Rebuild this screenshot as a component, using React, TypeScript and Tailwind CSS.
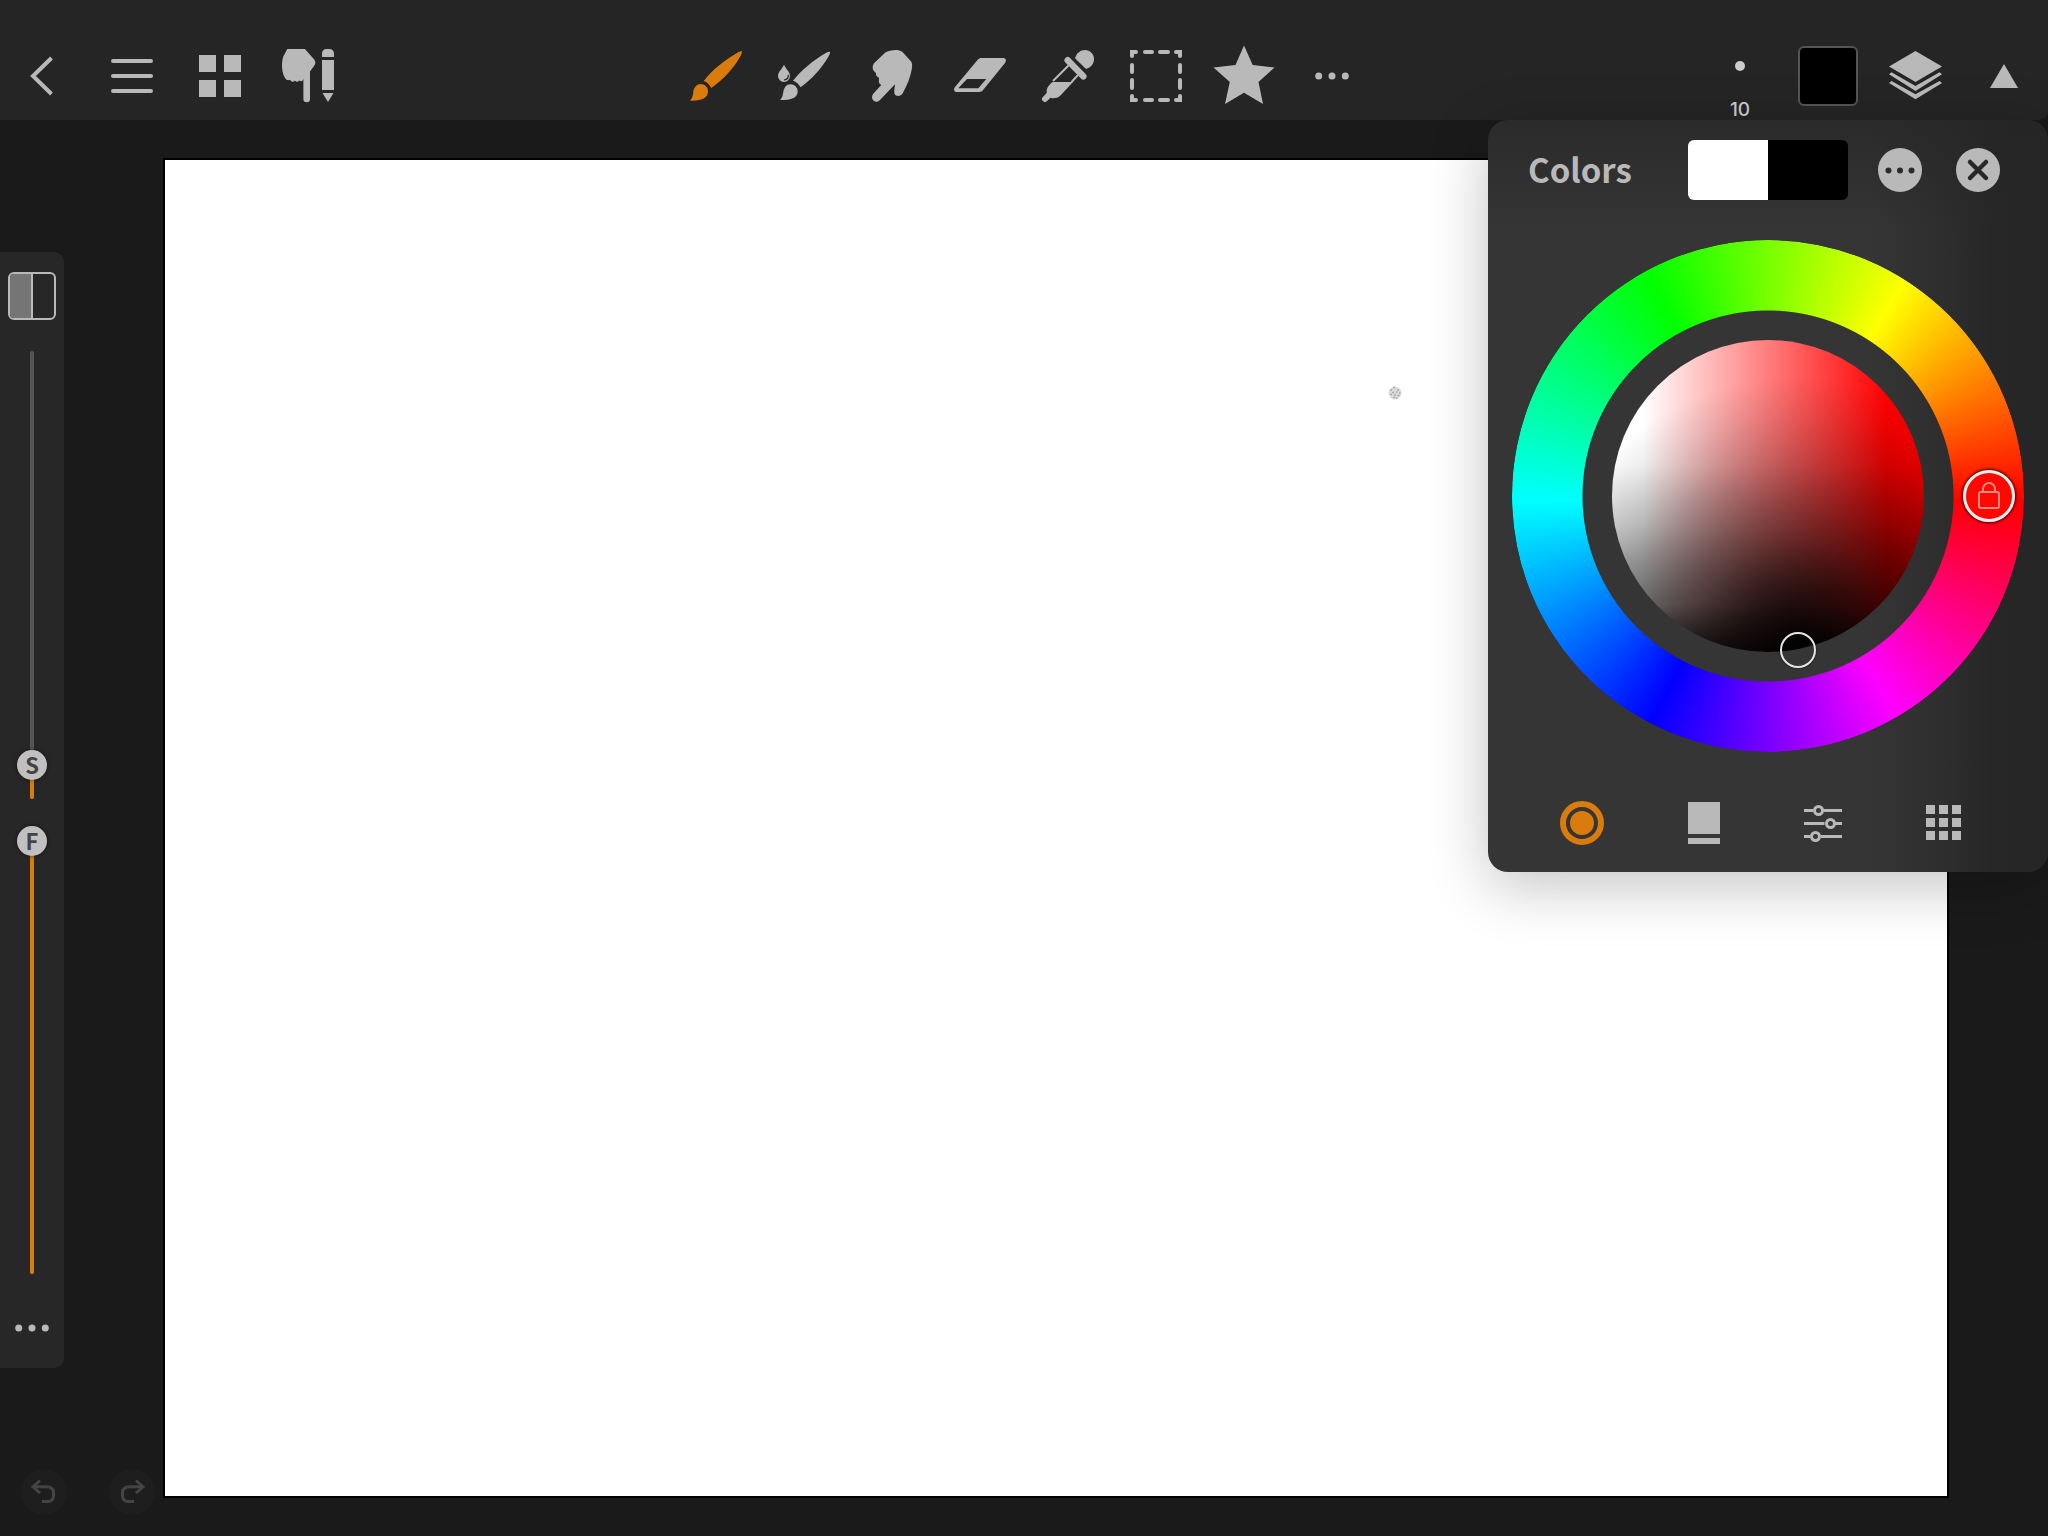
import { useState, type ReactNode } from "react";

type IconProps = { children: ReactNode };

function ToolIcon({ children }: IconProps) {
  return (
    <svg viewBox="0 0 88 88" className="size-[88px]" fill="currentColor" aria-hidden="true">
      {children}
    </svg>
  );
}

function ToolButton({
  label,
  active = false,
  children,
}: {
  label: string;
  active?: boolean;
  children: ReactNode;
}) {
  return (
    <button
      type="button"
      aria-label={label}
      aria-pressed={active}
      className={`size-[88px] shrink-0 ${active ? "text-[#d97b0d]" : "text-[#b9b9b9]"}`}
    >
      <ToolIcon>{children}</ToolIcon>
    </button>
  );
}

function Dots() {
  return (
    <>
      <circle cx="30.7" cy="44" r="3.5" />
      <circle cx="44" cy="44" r="3.5" />
      <circle cx="57.3" cy="44" r="3.5" />
    </>
  );
}

function TopBar() {
  return (
    <header className="flex justify-between rounded-br-[10px] bg-[#252525] pt-8">
      <nav aria-label="Document" className="flex">
        <ToolButton label="Back">
          <path d="M51.5 26 33 44l18.500 18" fill="none" stroke="currentColor" strokeWidth="4" />
        </ToolButton>
        <ToolButton label="Menu">
          <path d="M25 29H63M25 44H63M25 59H63" stroke="currentColor" strokeWidth="4" strokeLinecap="round" />
        </ToolButton>
        <ToolButton label="Gallery">
          <path d="M23 23h17v17H23zM48 23h17v17H48zM23 48h17v17H23zM48 48h17v17H48z" />
        </ToolButton>
        <ToolButton label="Finger and stylus">
          <path d="M23.300 17H41l9.200 10.500c1.600 2.300 1.600 4 0 6.200L46 39.500V67a3.300 3.300 0 0 1-6.600 0V46.500c-.5 2.800-2.600 3.700-3.900 1.700-1.300 2-3.500 1.800-4.600.2-1.300 1.800-3.500 1.700-4.900-.7-1.500 1-3.800.2-5-1.800-3.500-5.500-3.700-16-1.700-21.500z" />
          <path d="M58 25v-3.500c0-3 2-4.500 4.500-4.500h3c2.500 0 4.500 1.500 4.500 4.500V25zM58 28h12v30H58zM58.500 61h11L64 70z" />
        </ToolButton>
      </nav>

      <div role="toolbar" aria-label="Tools" className="flex">
        <ToolButton label="Paint" active>
          <path d="M70 19.300c-1.500-.6-3 .5-5 1.600C53 27.500 40 38 31.700 49c3.300 1.200 6 3.600 7.600 7C51 48 62 36 68.500 24c1-2 1.700-3.700 1.500-4.700z" />
          <path d="M18 68.500c2.600-2.300 2.800-5 3.300-8.500.6-4.500 3.500-8 7.500-8 4.200 0 7.200 3.300 7.200 7.300 0 4-2.400 6.700-6 8-3.800 1.300-8 1.700-12 1.200z" />
        </ToolButton>
        <ToolButton label="Blend">
          <path d="M70 20c-1.500-.6-3 .5-5 1.600C54 28 41.500 38 33 48.700c3.300 1.200 6 3.400 7.500 6.600C51.500 47.500 62 36 68.500 24.500c1-2 1.700-3.500 1.500-4.500z" />
          <path d="M20 67.800c2.500-2.200 2.700-4.300 3.200-7.300.7-4.800 3.200-8.300 7.200-8.300 4.200 0 7.300 3.300 7.300 7 0 4-2.400 6.300-6 7.600-3.700 1.200-7.700 1.500-11.700 1z" />
          <path d="M24 32.700c2 4.300 6 7.300 6 11.300a6 6 0 0 1-12 0c0-4 4-7 6-11.300z" />
          <path d="M28.300 43.500c0 2.500-1.300 4-3.800 4.300" fill="none" stroke="#252525" strokeWidth="1.300" strokeLinecap="round" />
        </ToolButton>
        <ToolButton label="Smudge">
          <path d="M37 20.700c5-2.400 12-4 17.300-1l9 10c1 2 .9 4 .7 6.300-1.500 9-4.600 17-9.300 25.300-2.200 3.800-7.900 3.500-8.400-.6-.2-3.200.5-5.600.7-8.400L32 68c-1.800 2-4.500 2.400-6.300.8-2.200-1.800-2.200-5-.2-7.200l7.800-8.600c-2-1-2.900-2.800-2.300-5-.2-1.600.2-1.600 0-2.300-2.500-1-3.400-2.500-3-4.700-3.300-2-4.500-6-2-9.700z" />
        </ToolButton>
        <ToolButton label="Eraser">
          <path
            fillRule="evenodd"
            d="M45.500 26h21.500c3 0 3.800 2.500 2 5L47.500 57.500C46 59.300 45 60 43 60H21c-3 0-3.800-2.600-2-5l22.500-27c1.300-1.500 2.300-2 4-2zM31 47l-8.700 9.300h20L50.300 47z"
          />
        </ToolButton>
        <ToolButton label="Color picker">
          <path d="M51 26.300c1.500-5.300 5.500-8.300 10-8.300 5 0 9 4 9 9 0 4.500-3 8.500-8 10z" />
          <path d="M43.700 28.300 59.300 44.300" stroke="currentColor" strokeWidth="6.500" strokeLinecap="round" />
          <path d="M44.500 33.500 29 49M54 43 47.500 50" stroke="currentColor" strokeWidth="2" />
          <path d="M28.500 50H49L36 64c-2.500 2-6 2.700-9 2l-4-4c-1.200-5 .5-7.500 5.500-12z" />
          <path d="M25.300 62.700 21 67" stroke="currentColor" strokeWidth="6" strokeLinecap="round" />
        </ToolButton>
        <ToolButton label="Selection">
          <path
            d="M20 24v-4h4M64 20h4v4M68 64v4h-4M24 68h-4v-4M33 20h7M48 20h8M33 68h7M48 68h8M20 33v7M20 48v8M68 33v7M68 48v8"
            fill="none"
            stroke="currentColor"
            strokeWidth="4"
            strokeLinecap="round"
          />
        </ToolButton>
        <ToolButton label="Favorites">
          <path d="M44 13.500 52.700 33l21.800 2.500L58.500 50 63 72 44 60.700 25 72l4.800-22-16.300-14.500L35.500 33z" />
        </ToolButton>
        <ToolButton label="More tools">
          <Dots />
        </ToolButton>
      </div>

      <div className="flex">
        <button
          type="button"
          aria-label="Brush size 10"
          className="flex size-[88px] flex-col items-center justify-between pt-[29px] text-[#cccccc]"
        >
          <span className="size-[10px] rounded-full bg-current" />
          <span className="font-['Inter',sans-serif] text-[19px] leading-[20px] font-medium">10</span>
        </button>
        <button type="button" aria-label="Current color" className="flex size-[88px] items-center justify-center">
          <span className="size-[60px] rounded-[6px] border-2 border-[#555555] bg-black" />
        </button>
        <ToolButton label="Layers">
          <path d="M43.500 19 70 34.500 43.500 50 17 34.500z" />
          <path d="M19.500 40.300 43.500 54l24-13.700 2.500 2L43.500 59 17 42.300zM19.500 49l24 13.300L67.500 49l2.500 2-26.500 16.300L17 51z" />
        </ToolButton>
        <ToolButton label="Collapse toolbar">
          <path d="M44 32 58 56H30z" />
        </ToolButton>
      </div>
    </header>
  );
}

function VerticalSlider({ name, letter, initial }: { name: string; letter: string; initial: number }) {
  const [value, setValue] = useState(initial);
  const bottom = `calc((100% - 30px) * ${value / 1000})`;

  return (
    <label className="relative flex h-[448px] w-[30px] justify-center">
      <span className="h-full w-1 rounded-full bg-[#555555]" />
      <span
        className="absolute bottom-0 w-1 rounded-full bg-[#d97b0d]"
        style={{ height: `calc(${bottom} + 15px)` }}
      />
      <span
        className="absolute flex size-[30px] items-center justify-center rounded-full bg-[#c0c0c0] pb-[2px] font-['Noto_Sans_CJK_JP',sans-serif] text-[22px] leading-[28px] font-bold text-[#444444] shadow-[0_0_4px_rgba(0,0,0,0.5)]"
        style={{ bottom }}
      >
        {letter}
      </span>
      <input
        type="range"
        aria-label={name}
        min={0}
        max={1000}
        value={value}
        onChange={(e) => setValue(Number(e.target.value))}
        className="absolute inset-0 h-full w-full opacity-0 [direction:rtl] [writing-mode:vertical-lr]"
      />
    </label>
  );
}

function SideBar() {
  return (
    <aside
      aria-label="Brush settings"
      className="flex w-16 flex-col items-center rounded-r-[10px] bg-[#272727] py-5"
    >
      <button
        type="button"
        aria-label="Toggle side"
        className="flex size-12 overflow-hidden rounded-[6px] border-2 border-[#b9b9b9]"
      >
        <span className="h-full flex-1 border-r-2 border-[#b9b9b9] bg-[#757575]" />
        <span className="h-full w-[21px]" />
      </button>
      <div className="mt-[31px] flex flex-col gap-[27px]">
        <VerticalSlider name="Size" letter="S" initial={45} />
        <VerticalSlider name="Flow" letter="F" initial={1000} />
      </div>
      <button type="button" aria-label="More settings" className="mt-[34px] h-10 w-16 text-[#b9b9b9]">
        <svg viewBox="12 24 64 40" className="h-10 w-16" fill="currentColor" aria-hidden="true">
          <Dots />
        </svg>
      </button>
    </aside>
  );
}

function History() {
  return (
    <div className="mt-auto flex gap-[42px] pb-[21px] pl-[21px] text-[#444444]">
      <button type="button" aria-label="Undo" className="size-[46px] rounded-full bg-[#1e1e1e]">
        <svg viewBox="0 0 46 46" fill="none" stroke="currentColor" strokeWidth="3" aria-hidden="true">
          <path d="M19 11.500 12 17.700l7 6.300M12 17.700h13.500c4.500 0 7 2.300 7 6.300v2.500c0 4-2 6-6 6H21" />
        </svg>
      </button>
      <button type="button" aria-label="Redo" className="size-[46px] rounded-full bg-[#1e1e1e]">
        <svg viewBox="0 0 46 46" fill="none" stroke="currentColor" strokeWidth="3" aria-hidden="true">
          <path d="m27 11.500 7 6.200-7 6.300M34 17.700H20.500c-4.500 0-7 2.300-7 6.300v2.500c0 4 2 6 6 6H25" />
        </svg>
      </button>
    </div>
  );
}

function ColorWheel() {
  return (
    <div className="relative mx-auto mt-10 flex size-[512px] items-center justify-center">
      <div className="absolute inset-0 rounded-full bg-[conic-gradient(from_90deg_at_50%_51%,#f00_0deg,#f0f_59deg,#00f_118deg,#0ff_180deg,#0f0_242deg,#ff0_302deg,#f00_360deg)] [mask-image:radial-gradient(circle,transparent_185px,black_186px)]" />
      <div className="size-[312px] rounded-full bg-[radial-gradient(circle_at_60%_100%,rgba(0,0,0,0.92)_10px,rgba(0,0,0,0.74)_60px,rgba(0,0,0,0.52)_110px,rgba(0,0,0,0.34)_160px,rgba(0,0,0,0.18)_205px,rgba(0,0,0,0.08)_240px,transparent_275px),linear-gradient(to_bottom,transparent_40%,rgba(0,0,0,0.12)_60%,rgba(0,0,0,0.4)_85%,rgba(0,0,0,0.85)_100%),linear-gradient(to_right,#fff_10%,#f00_88%)]" />

      {/* Saturation / brightness handle */}
      <button
        type="button"
        aria-label="Saturation and brightness"
        className="absolute top-[392px] left-[268px] size-9 rounded-full border-2 border-[#e4e4e4] shadow-[0_0_2px_rgba(0,0,0,0.8)]"
      />
      {/* Hue handle */}
      <button
        type="button"
        aria-label="Lock hue"
        className="absolute top-[230px] right-[9px] flex size-[52px] items-center justify-center rounded-full border-3 border-[#f5eeee] bg-[#ff0800] shadow-[0_0_3px_1px_rgba(0,0,0,0.8)]"
      >
        <svg viewBox="0 0 24 30" className="h-[30px] w-6" fill="none" stroke="#ff8a86" strokeWidth="2" aria-hidden="true">
          <rect x="2" y="11" width="20" height="16" rx="2" />
          <path d="M6 11V8a6 6 0 0 1 12 0v3" />
        </svg>
      </button>
    </div>
  );
}

const TABS = [
  {
    id: "wheel",
    label: "Wheel",
    icon: (
      <>
        <circle cx="21" cy="22" r="19" fill="none" stroke="currentColor" strokeWidth="6" />
        <circle cx="21" cy="22" r="12" />
      </>
    ),
  },
  {
    id: "square",
    label: "Square",
    icon: <path d="M7 1h32v32H7zM7 37h32v6H7z" />,
  },
  {
    id: "sliders",
    label: "Sliders",
    icon: (
      <g fill="none" stroke="currentColor" strokeWidth="3">
        <path d="M3 9.500h9M22 9.500h19M3 22.500h20.500M34 22.500h7M3 35.500h6M20 35.500h21" />
        <circle cx="17.500" cy="9.500" r="4" />
        <circle cx="29.500" cy="22.500" r="4" />
        <circle cx="14.500" cy="35.500" r="4" />
      </g>
    ),
  },
  {
    id: "swatches",
    label: "Swatches",
    icon: (
      <path d="M5 4h9v9H5zM18 4h9v9h-9zM31 4h9v9h-9zM5 17h9v9H5zM18 17h9v9h-9zM31 17h9v9h-9zM5 30h9v9H5zM18 30h9v9h-9zM31 30h9v9h-9z" />
    ),
  },
];

function ColorsPanel() {
  const [tab, setTab] = useState("wheel");

  return (
    <section
      aria-labelledby="colors-title"
      className="absolute top-[120px] right-0 w-[560px] rounded-[20px] bg-[linear-gradient(to_bottom,rgba(37,37,37,0.65),rgba(37,37,37,0)_110px),linear-gradient(to_right,#353535_68%,#2e2e2e_81%,#272727_90%,#252525)] pt-5 pb-[19px] shadow-[0_14px_60px_rgba(0,0,0,0.24)]"
    >
      <div className="flex h-[60px] items-center pr-12 pl-10 text-[#b9b9b9]">
        <h2
          id="colors-title"
          className="flex-1 pb-[2px] font-['Noto_Sans_CJK_JP',sans-serif] text-[33px] leading-[58px] font-bold"
        >
          Colors
        </h2>
        <div className="flex h-[60px] w-40 overflow-hidden rounded-[6px]">
          <button type="button" aria-label="Previous color" className="flex-1 bg-white" />
          <button type="button" aria-label="New color" className="flex-1 bg-black" />
        </div>
        <button type="button" aria-label="Color options" className="ml-[30px] size-11">
          <svg viewBox="0 0 44 44" fill="currentColor" aria-hidden="true">
            <circle cx="22" cy="22" r="22" />
            <g fill="#2b2b2b">
              <circle cx="10.500" cy="22.500" r="3" />
              <circle cx="22" cy="22.500" r="3" />
              <circle cx="33.500" cy="22.500" r="3" />
            </g>
          </svg>
        </button>
        <button type="button" aria-label="Close" className="ml-[34px] size-11">
          <svg viewBox="0 0 44 44" fill="currentColor" aria-hidden="true">
            <circle cx="22" cy="22" r="22" />
            <path d="m14 14 16 16M30 14 14 30" stroke="#282828" strokeWidth="4.500" strokeLinecap="round" />
          </svg>
        </button>
      </div>

      <ColorWheel />

      <div role="tablist" aria-label="Color mode" className="mt-[41px] flex pr-[45px] pl-[35px]">
        {TABS.map(({ id, label, icon }) => (
          <button
            key={id}
            type="button"
            role="tab"
            aria-label={label}
            aria-selected={tab === id}
            onClick={() => setTab(id)}
            className={`flex h-[60px] flex-1 items-center justify-center ${
              tab === id ? "text-[#d97b0d]" : "text-[#b9b9b9]"
            }`}
          >
            <svg viewBox="0 0 44 44" className="size-11 overflow-visible" fill="currentColor" aria-hidden="true">
              {icon}
            </svg>
          </button>
        ))}
      </div>
    </section>
  );
}

export default function App() {
  return (
    <div className="relative flex min-h-screen flex-col overflow-hidden bg-[#1a1a1a]">
      <TopBar />
      <main className="flex flex-1">
        <div className="flex w-[165px] shrink-0 flex-col pt-[132px]">
          <SideBar />
          <History />
        </div>
        <div className="relative my-10 mr-[101px] flex-1 bg-white shadow-[0_0_0_2px_#000]">
          {/* Brush stamp */}
          <svg viewBox="0 0 14 14" className="absolute top-[226px] left-[1223px] size-[14px]" aria-hidden="true">
            <circle cx="7" cy="7" r="6.500" fill="#dcdcdc" />
            <path
              d="M5 1.500h2M2 4h2M9 4h2M4 6.500h2M8 6h1.500M11 7h1.500M2 8.500h2M6 9h2M9.500 9.500h2M5 11.500h2M8 12h1.500"
              stroke="#aaaaaa"
              strokeWidth="1.300"
            />
          </svg>
        </div>
      </main>
      <ColorsPanel />
    </div>
  );
}
